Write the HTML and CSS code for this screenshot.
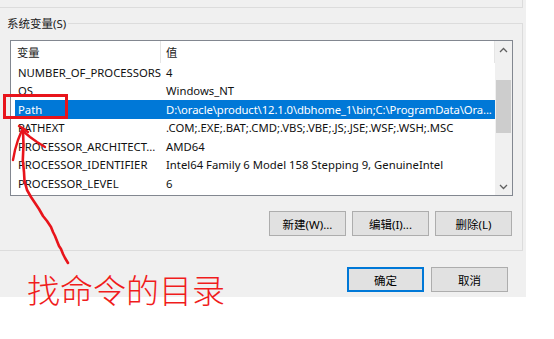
FILE: index.html
```html
<!DOCTYPE html>
<html lang="zh-CN">
<head>
<meta charset="utf-8">
<title>系统变量</title>
<link rel="stylesheet" href="styles.css">
</head>
<body>
<div class="dialog">
  <div class="prev-group"></div>
  <div class="group">
    <div class="group-label">系统变量(S)</div>
    <div class="listbox">
      <div class="list-content">
        <div class="list-header">
          <div class="hcell hc1">变量</div>
          <div class="hcell hc2">值</div>
        </div>
        <div class="row"><div class="cell c1">NUMBER_OF_PROCESSORS</div><div class="cell c2">4</div></div>
        <div class="row"><div class="cell c1">OS</div><div class="cell c2">Windows_NT</div></div>
        <div class="row selected"><div class="cell c1">Path</div><div class="cell c2">D:\oracle\product\12.1.0\dbhome_1\bin;C:\ProgramData\Ora...</div></div>
        <div class="row"><div class="cell c1">PATHEXT</div><div class="cell c2">.COM;.EXE;.BAT;.CMD;.VBS;.VBE;.JS;.JSE;.WSF;.WSH;.MSC</div></div>
        <div class="row"><div class="cell c1">PROCESSOR_ARCHITECT...</div><div class="cell c2">AMD64</div></div>
        <div class="row"><div class="cell c1">PROCESSOR_IDENTIFIER</div><div class="cell c2">Intel64 Family 6 Model 158 Stepping 9, GenuineIntel</div></div>
        <div class="row"><div class="cell c1">PROCESSOR_LEVEL</div><div class="cell c2">6</div></div>
      </div>
      <div class="scrollbar">
        <div class="sb-btn"><svg width="9" height="6" viewBox="0 0 9 6"><polyline points="1,5 4.5,1.5 8,5" fill="none" stroke="#606060" stroke-width="1.3"/></svg></div>
        <div class="sb-track"><div class="sb-thumb"></div></div>
        <div class="sb-btn"><svg width="9" height="6" viewBox="0 0 9 6"><polyline points="1,1 4.5,4.5 8,1" fill="none" stroke="#606060" stroke-width="1.3"/></svg></div>
      </div>
    </div>
    <div class="group-buttons">
      <button class="btn">新建(W)...</button>
      <button class="btn">编辑(I)...</button>
      <button class="btn">删除(L)</button>
    </div>
  </div>
  <div class="dialog-buttons">
    <button class="btn btn-default">确定</button>
    <button class="btn">取消</button>
  </div>
</div>
<svg class="annotation" width="554" height="339" viewBox="0 0 554 339">
  <rect x="4.5" y="95.5" width="62" height="22" fill="none" stroke="#e8141b" stroke-width="3"/>
  <path d="M23,131 L23.5,145 L22.8,160 L24,172 L24.5,181 L27,190 L31,197 L35,203 L39,209 L43,216 L47,221 L51,227 L53,232 L55,236 L57,241 L59,246 L61,249 L63,254 L65,258 L68,263" fill="none" stroke="#e8141b" stroke-width="2.6" stroke-linecap="round" stroke-linejoin="round"/>
  <path d="M22,130 L18,140 L15,150 L13,160" fill="none" stroke="#e8141b" stroke-width="2.4" stroke-linecap="round"/>
  <path d="M24,132 L30,137 L37,142 L45,147" fill="none" stroke="#e8141b" stroke-width="2.4" stroke-linecap="round"/>
  <path d="M19,126 L24,129 L28,132" fill="none" stroke="#e8141b" stroke-width="2.4" stroke-linecap="round"/>
</svg>
<div class="note">找命令的目录</div>
</body>
</html>
```

FILE: styles.css
```css
html, body {
  margin: 0;
  padding: 0;
  background: #ffffff;
}

body {
  width: 554px;
  height: 339px;
  overflow: hidden;
  position: relative;
  font-family: "Noto Sans", "Noto Sans CJK SC", sans-serif;
  font-size: 12px;
  color: #000;
}

.dialog {
  width: 526px;
  height: 297px;
  background: #f0f0f0;
  display: flex;
  flex-direction: column;
  box-sizing: border-box;
}

.prev-group {
  width: 523px;
  height: 8px;
  box-sizing: border-box;
  border-right: 1px solid #dcdcdc;
  border-bottom: 1px solid #dcdcdc;
  flex: none;
}

.group {
  margin-top: 15px;
  width: 523px;
  height: 228px;
  box-sizing: border-box;
  border-top: 1px solid #dcdcdc;
  border-right: 1px solid #dcdcdc;
  border-bottom: 1px solid #dcdcdc;
  padding: 0 10px 0 10px;
  display: flex;
  flex-direction: column;
  flex: none;
}

.group-label {
  margin: -8px 0 0 -10px;
  padding-left: 7px;
  padding-right: 2px;
  height: 16px;
  line-height: 16px;
  background: #f0f0f0;
  align-self: flex-start;
  color: #1a1a1a;
  font-size: 11.5px;
}

.listbox {
  margin-top: 8px;
  width: 503px;
  height: 156px;
  box-sizing: border-box;
  border: 1px solid #828790;
  background: #fff;
  display: flex;
  flex: none;
  font-size: 11.3px;
}

.list-content {
  width: 484px;
  overflow: hidden;
  display: flex;
  flex-direction: column;
}

.list-header {
  height: 22px;
  display: flex;
  align-items: center;
  flex: none;
  border-right: 1px solid #e5e5e5;
}

.hcell {
  height: 100%;
  display: flex;
  align-items: center;
  box-sizing: border-box;
  color: #1a1a1a;
}

.hc1 {
  width: 150px;
  padding-left: 6px;
  border-right: 1px solid #e5e5e5;
}

.hc2 {
  padding-left: 5px;
}

.row {
  margin-left: 4px;
  width: 480px;
  height: 18.5px;
  display: flex;
  align-items: center;
  flex: none;
  color: #111;
}

.row.selected {
  background: #0078d7;
  color: #fff;
}

.row.selected .c2 {
  letter-spacing: -0.12px;
}

.cell {
  white-space: nowrap;
  overflow: hidden;
  box-sizing: border-box;
}

.c1 {
  width: 146px;
  padding-left: 3px;
  flex: none;
}

.c2 {
  padding-left: 5px;
  flex: 1;
}

.scrollbar {
  width: 17px;
  background: #f0f0f0;
  display: flex;
  flex-direction: column;
  flex: none;
}

.sb-btn {
  height: 17px;
  display: flex;
  align-items: center;
  justify-content: center;
  flex: none;
}

.sb-track {
  flex: 1;
  padding-top: 22px;
}

.sb-thumb {
  margin: 0 1px;
  height: 53px;
  background: #cdcdcd;
}

.group-buttons {
  margin-top: 15px;
  display: flex;
  justify-content: flex-end;
  gap: 6px;
}

.btn {
  width: 77px;
  height: 25px;
  box-sizing: border-box;
  border: 1px solid #adadad;
  background: #e1e1e1;
  font-family: "Noto Sans", "Noto Sans CJK SC", sans-serif;
  font-size: 11.5px;
  color: #000;
  padding: 0;
  margin: 0;
}

.btn-default {
  border: 2px solid #0078d7;
}

.dialog-buttons {
  margin-top: 16px;
  padding-right: 18px;
  display: flex;
  justify-content: flex-end;
  gap: 7px;
}

.annotation {
  position: absolute;
  left: 0;
  top: 0;
  pointer-events: none;
}

.note {
  position: absolute;
  left: 27px;
  top: 269px;
  font-family: "Noto Sans CJK SC", sans-serif;
  font-size: 33px;
  font-weight: 300;
  line-height: 40px;
  color: #f01c1c;
  white-space: nowrap;
}
```
